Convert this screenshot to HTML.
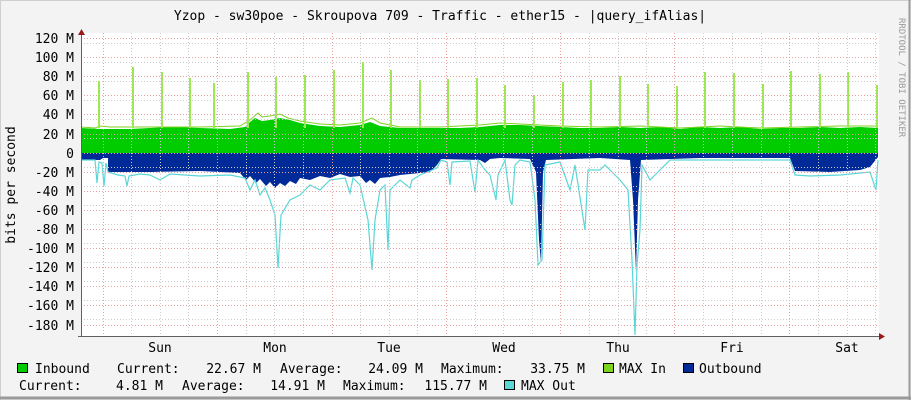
<!DOCTYPE html>
<html><head><meta charset="utf-8"><style>
html,body{margin:0;padding:0;}
body{width:911px;height:400px;overflow:hidden;background:#f3f3f3;}
svg{display:block;}
text{font-family:"DejaVu Sans Mono","Liberation Mono",monospace;font-size:13px;fill:#000;}
</style></head><body>
<svg width="911" height="400" viewBox="0 0 911 400" xmlns="http://www.w3.org/2000/svg">
<rect x="0" y="0" width="911" height="400" fill="#f3f3f3"/>
<line x1="0.5" y1="0" x2="0.5" y2="400" stroke="#cfcfcf"/>
<line x1="0" y1="0.5" x2="911" y2="0.5" stroke="#cfcfcf"/>
<line x1="909.5" y1="0" x2="909.5" y2="400" stroke="#9a9a9a" stroke-width="2"/>
<line x1="0" y1="398" x2="911" y2="398" stroke="#9a9a9a" stroke-width="3"/>
<rect x="81" y="33" width="798" height="303" fill="#ffffff"/>

<!-- data -->
<polygon fill="#00cc00" points="81,153 81,128 100,129 130,129 150,128 170,127 200,128 230,129 245,127 250,122 255,118 262,121 270,120 280,118 290,120 300,123 320,126 340,127 360,125 370,122 380,126 400,128 430,128 460,128 480,127 490,126 500,125 520,125 540,126 560,127 580,128 600,128 620,127 640,128 660,127 680,129 700,127 720,128 740,127 760,129 780,128 800,128 820,127 840,128 860,127 878,128 878,153"/>
<polyline fill="none" stroke="#7ed321" stroke-width="1" points="81,127 95,128 100,126 110,127 150,127 200,127 240,126 250,120 258,113 262,117 270,116 280,114 288,118 300,121 320,124 340,125 360,123 372,118 380,123 400,127 440,127 480,125 500,123 520,124 560,126 600,127 640,126 680,128 720,126 760,128 800,127 840,126 878,126"/>
<g stroke="#9be84f" stroke-width="2">
<line x1="99" y1="128" x2="99" y2="81"/><line x1="133" y1="128" x2="133" y2="67"/><line x1="162" y1="128" x2="162" y2="72"/><line x1="190" y1="128" x2="190" y2="78"/><line x1="214" y1="128" x2="214" y2="83"/><line x1="248" y1="128" x2="248" y2="72"/><line x1="276" y1="128" x2="276" y2="77"/><line x1="305" y1="128" x2="305" y2="75"/><line x1="334" y1="128" x2="334" y2="70"/><line x1="363" y1="128" x2="363" y2="62"/><line x1="391" y1="128" x2="391" y2="70"/><line x1="420" y1="128" x2="420" y2="80"/><line x1="448" y1="128" x2="448" y2="79"/><line x1="477" y1="128" x2="477" y2="78"/><line x1="505" y1="128" x2="505" y2="85"/><line x1="534" y1="128" x2="534" y2="95"/><line x1="563" y1="128" x2="563" y2="82"/><line x1="591" y1="128" x2="591" y2="80"/><line x1="620" y1="128" x2="620" y2="76"/><line x1="648" y1="128" x2="648" y2="84"/><line x1="677" y1="128" x2="677" y2="86"/><line x1="705" y1="128" x2="705" y2="72"/><line x1="734" y1="128" x2="734" y2="73"/><line x1="763" y1="128" x2="763" y2="84"/><line x1="791" y1="128" x2="791" y2="71"/><line x1="820" y1="128" x2="820" y2="74"/><line x1="848" y1="128" x2="848" y2="72"/><line x1="877" y1="128" x2="877" y2="85"/>
</g>
<polygon fill="#002a97" points="81,153 81,160 100,160 103,158 108,158 108,172 150,172 200,171 240,173 246,180 250,176 256,183 260,179 266,186 270,182 275,188 280,183 285,186 290,181 296,184 300,178 310,180 320,176 330,178 340,174 350,177 360,176 366,183 370,180 375,184 380,178 390,177 400,175 430,172 437,165 441,159 480,160 485,163 490,159 500,158 530,159 536,172 539,240 541,262 543,172 546,160 600,158 630,160 633,200 636,272 638,200 641,160 700,158 750,158 790,158 795,171 830,172 860,170 870,167 878,157 878,153"/>
<polyline fill="none" stroke="#5ad6d6" stroke-width="1.2" points="81,160 95,160 97,183 99,162 102,163 104,186 106,163 108,172 118,175 125,176 127,186 129,176 140,174 150,175 160,180 170,174 200,176 230,175 245,178 250,190 255,180 260,195 265,188 270,200 275,215 278,268 281,215 290,200 300,195 310,185 320,190 330,180 345,178 350,193 353,178 360,185 368,220 372,270 375,220 380,190 385,185 388,250 390,190 400,180 410,188 412,180 420,175 437,168 441,160 447,162 450,185 452,162 470,161 475,192 478,160 485,170 490,175 496,200 498,175 505,160 510,200 512,205 515,165 520,160 530,162 535,200 538,265 542,260 545,165 560,162 570,190 575,165 585,230 588,170 600,170 605,165 620,180 628,190 632,260 635,335 637,265 640,230 642,165 650,180 660,170 670,160 690,160 720,160 750,160 790,160 795,175 810,176 840,175 870,172 876,190 878,160"/>

<!-- grid -->
<g stroke="#cccccc" stroke-width="1" stroke-dasharray="1,2" fill="none">
<path d="M81 43.5H879M81 62.5H879M81 81.5H879M81 100.5H879M81 119.5H879M81 138.5H879M81 167.5H879M81 186.5H879M81 205.5H879M81 224.5H879M81 243.5H879M81 262.5H879M81 281.5H879M81 300.5H879M81 319.5H879"/>
<path d="M131.5 33V336M160.5 33V336M188.5 33V336M246.5 33V336M274.5 33V336M303.5 33V336M360.5 33V336M389.5 33V336M417.5 33V336M475.5 33V336M503.5 33V336M532.5 33V336M589.5 33V336M618.5 33V336M646.5 33V336M703.5 33V336M732.5 33V336M761.5 33V336M818.5 33V336M847.5 33V336M875.5 33V336"/>
</g>
<g stroke="#e8a0a0" stroke-width="1" stroke-dasharray="1,2" fill="none">
<path d="M81 38.5H879M81 57.5H879M81 76.5H879M81 95.5H879M81 114.5H879M81 134.5H879M81 153.5H879M81 172.5H879M81 191.5H879M81 210.5H879M81 229.5H879M81 248.5H879M81 267.5H879M81 286.5H879M81 305.5H879M81 325.5H879"/>
<path d="M103.5 33V336M217.5 33V336M332.5 33V336M446.5 33V336M560.5 33V336M674.5 33V336M789.5 33V336"/>
</g>
<!-- axes -->
<line x1="81.5" y1="33" x2="81.5" y2="337" stroke="#606060"/>
<line x1="78" y1="336.5" x2="883" y2="336.5" stroke="#606060"/>
<polygon points="78,35 85,35 81.5,29" fill="#9a1a1a"/>
<polygon points="879,333 879,340 885,336.5" fill="#9a1a1a"/>

<!-- y labels -->
<g text-anchor="end">
<text x="74" y="43">120 M</text><text x="74" y="62">100 M</text><text x="74" y="81">80 M</text><text x="74" y="100">60 M</text><text x="74" y="119">40 M</text><text x="74" y="139">20 M</text><text x="74" y="158">0</text><text x="74" y="177">-20 M</text><text x="74" y="196">-40 M</text><text x="74" y="215">-60 M</text><text x="74" y="234">-80 M</text><text x="74" y="253">-100 M</text><text x="74" y="272">-120 M</text><text x="74" y="291">-140 M</text><text x="74" y="310">-160 M</text><text x="74" y="330">-180 M</text>
</g>
<g text-anchor="middle">
<text x="160" y="352">Sun</text><text x="275" y="352">Mon</text><text x="389" y="352">Tue</text><text x="504" y="352">Wed</text><text x="618" y="352">Thu</text><text x="732" y="352">Fri</text><text x="847" y="352">Sat</text>
<text x="440" y="20">Yzop - sw30poe - Skroupova 709 - Traffic - ether15 - |query_ifAlias|</text>
</g>
<text transform="translate(15,185) rotate(-90)" text-anchor="middle">bits per second</text>
<text transform="translate(899,18) rotate(90)" style="font-size:9px;fill:#999">RRDTOOL / TOBI OETIKER</text>

<!-- legend -->
<rect x="17.5" y="363.5" width="10" height="9" fill="#00cc00" stroke="#000"/>
<text x="35" y="373">Inbound</text>
<text x="117" y="373">Current:</text><text x="261" y="373" text-anchor="end">22.67 M</text>
<text x="280" y="373">Average:</text><text x="423" y="373" text-anchor="end">24.09 M</text>
<text x="441" y="373">Maximum:</text><text x="585" y="373" text-anchor="end">33.75 M</text>
<rect x="603.5" y="363.5" width="10" height="9" fill="#7ed321" stroke="#000"/>
<text x="619" y="373">MAX In</text>
<rect x="683.5" y="363.5" width="10" height="9" fill="#002a97" stroke="#000"/>
<text x="699" y="373">Outbound</text>
<text x="19" y="390">Current:</text><text x="163" y="390" text-anchor="end">4.81 M</text>
<text x="182" y="390">Average:</text><text x="325" y="390" text-anchor="end">14.91 M</text>
<text x="343" y="390">Maximum:</text><text x="487" y="390" text-anchor="end">115.77 M</text>
<rect x="504.5" y="380.5" width="10" height="9" fill="#5ad6d6" stroke="#000"/>
<text x="521" y="390">MAX Out</text>
</svg>
</body></html>
